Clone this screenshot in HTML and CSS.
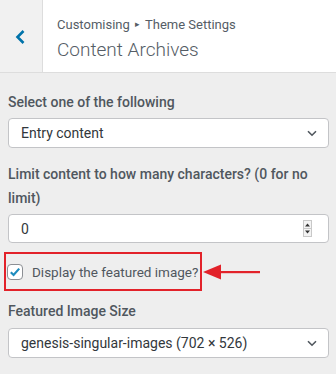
FILE: index.html
```html
<!DOCTYPE html>
<html lang="en">
<head>
<meta charset="utf-8">
<title>Content Archives</title>
<link rel="stylesheet" href="styles.css">
</head>
<body>
<div class="header">
  <div class="back">
    <svg width="12" height="16" viewBox="0 0 12 16"><path d="M8.5 2 L2.5 8 L8.5 14" fill="none" stroke="#0073aa" stroke-width="2.6"/></svg>
  </div>
  <div class="titles">
    <div class="crumb">Customising <span class="sep">&#9656;</span> Theme Settings</div>
    <div class="title">Content Archives</div>
  </div>
</div>
<div class="content">
  <div class="label">Select one of the following</div>
  <div class="select">
    <span>Entry content</span>
    <svg class="chev" width="10" height="7" viewBox="0 0 10 7"><path d="M1 1.2 L5 5.2 L9 1.2" fill="none" stroke="#50575e" stroke-width="1.6"/></svg>
  </div>
  <div class="label label2">Limit content to how many characters? (0 for no limit)</div>
  <div class="number">
    <span>0</span>
    <svg class="spin" width="9" height="17" viewBox="0 0 9 17">
      <rect x="0.5" y="0.5" width="8" height="16" fill="#f3f3f3" stroke="#c8c8c8"/>
      <line x1="0.5" y1="8.5" x2="8.5" y2="8.5" stroke="#c8c8c8"/>
      <path d="M2 6.5 L4.5 3.5 L7 6.5 Z" fill="#333"/>
      <path d="M2 10.5 L4.5 13.5 L7 10.5 Z" fill="#333"/>
    </svg>
  </div>
  <div class="check-row">
    <div class="highlight">
      <span class="checkbox">
        <svg width="14" height="14" viewBox="0 0 14 14"><path d="M2.8 7.2 L5.6 10 L11.2 3.6" fill="none" stroke="#1e8cbe" stroke-width="2.2"/></svg>
      </span>
      <span class="check-text">Display the featured image?</span>
    </div>
    <svg class="arrow" width="60" height="18" viewBox="0 0 60 18"><path d="M0 9 L18 1.5 L18 16.5 Z" fill="#e2222a"/><rect x="16" y="8" width="41" height="2.2" fill="#e2222a"/></svg>
  </div>
  <div class="label label3">Featured Image Size</div>
  <div class="select">
    <span>genesis-singular-images (702 × 526)</span>
    <svg class="chev" width="10" height="7" viewBox="0 0 10 7"><path d="M1 1.2 L5 5.2 L9 1.2" fill="none" stroke="#50575e" stroke-width="1.6"/></svg>
  </div>
</div>
</body>
</html>
```
FILE: styles.css
```css
* { box-sizing: border-box; }
html, body { margin: 0; padding: 0; }
body {
  background: #eeeeee;
  font-family: Roboto, "Liberation Sans", sans-serif;
  color: #50575e;
  width: 336px;
  height: 374px;
  overflow: hidden;
}
.header {
  display: flex;
  height: 73px;
  background: #fff;
  border-bottom: 1px solid #dddddd;
}
.back {
  width: 43px;
  background: #f1f1f1;
  border-right: 1px solid #dddddd;
  display: flex;
  align-items: center;
  justify-content: center;
}
.back svg { margin-top: 1px; }
.titles {
  padding: 15px 0 0 14px;
}
.crumb {
  font-size: 13px;
  line-height: 20px;
  color: #555d66;
}
.sep { font-size: 9px; position: relative; top: -2px; margin: 0 2px; }
.title {
  font-size: 19px;
  font-weight: 300;
  line-height: 28px;
  color: #555d66;
}
.content {
  padding: 17px 7px 0 8px;
}
.label {
  font-size: 14px;
  font-weight: 500;
  line-height: 24px;
  color: #50575e;
  margin-bottom: 4px;
}
.label2 { margin-top: 14px; margin-bottom: 4px; padding-right: 10px; }
.label3 { margin-top: 8px; margin-bottom: 5px; }
.select, .number {
  height: 30px;
  background: #fff;
  border: 1px solid #c3c4c7;
  border-radius: 4px;
  display: flex;
  align-items: center;
  justify-content: space-between;
  padding: 0 10px 0 12px;
  font-size: 14px;
  color: #32373c;
}
.number { height: 29px; padding-right: 16px; }
.chev { margin-right: 1px; }
.check-row {
  display: flex;
  align-items: center;
  margin-top: 9px;
  margin-left: -4px;
}
.highlight {
  width: 198px;
  height: 39px;
  border: 2px solid #e2222a;
  display: flex;
  align-items: center;
  padding-left: 1px;
}
.checkbox {
  width: 16px;
  height: 16px;
  border: 1px solid #8c8f94;
  border-radius: 4px;
  background: #fff;
  display: flex;
  align-items: center;
  justify-content: center;
  margin-top: 1px;
  flex-shrink: 0;
}
.check-text {
  margin-left: 9px;
  font-size: 13.5px;
  white-space: nowrap;
  color: #50575e;
}
.arrow { margin-left: 1px; }
```
